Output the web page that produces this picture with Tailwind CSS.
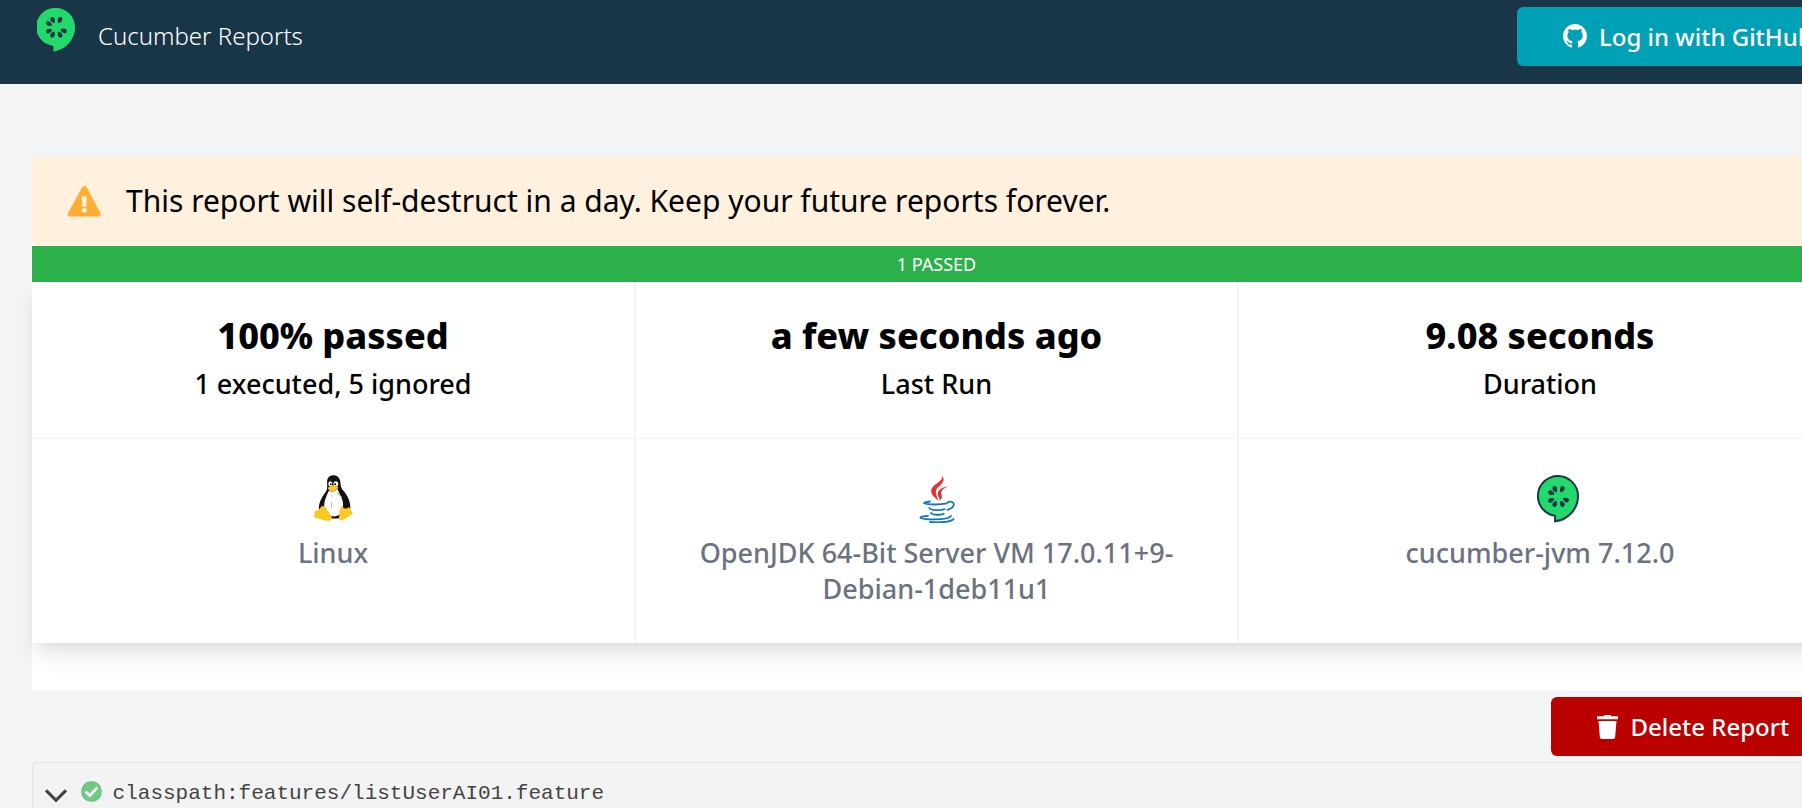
<!DOCTYPE html>
<html lang="en">
<head>
<meta charset="utf-8">
<title>Cucumber Reports</title>
<script src="https://cdn.jsdelivr.net/npm/@tailwindcss/browser@4"></script>
</head>
<body class="bg-[#f3f4f6] font-['Noto_Sans',sans-serif] text-black overflow-hidden">
<svg class="hidden">
  <symbol id="seeds" viewBox="-21 -21 42 42">
    <g>
      <path id="seed" d="M0-4.600C1.200-5.500 2.300-7.200 2.200-9C2.100-10.500 1.200-11.300 0-11.300S-2.100-10.500-2.200-9C-2.300-7.200-1.200-5.500 0-4.600Z" transform="rotate(26)"/>
      <use href="#seed" transform="rotate(-52)"/>
      <use href="#seed" transform="rotate(-90)"/>
      <use href="#seed" transform="rotate(-142)"/>
      <use href="#seed" transform="rotate(-180)"/>
      <use href="#seed" transform="rotate(128)"/>
      <use href="#seed" transform="rotate(88)"/>
    </g>
  </symbol>
</svg>
<div class="w-[1874px] h-[808px] overflow-hidden">
  <header class="h-[84px] bg-[#183648] pl-[37px] pr-8 flex justify-between items-start">
    <a class="flex items-start">
      <svg class="mt-2 w-[38px] h-[44px]" viewBox="0 0 38 44"><path fill="#23d96c" d="M19 0a19 19 0 0 0-2.600 37.900V43.500C28 42 38 32.500 38 19A19 19 0 0 0 19 0Z"/><use href="#seeds" x="-1.700" y="-1.700" width="42" height="42" fill="#183648"/></svg>
      <span class="ml-[23px] mt-[18px] text-2xl leading-9 font-light text-white">Cucumber Reports</span>
    </a>
    <button class="mt-[7px] w-[325px] h-[59px] rounded-md bg-[#00a0b6] flex items-center pl-[46px] text-white text-2xl font-medium whitespace-nowrap">
      <svg class="w-6 h-6 mr-3 -mt-0.5" viewBox="0 0 16 16" fill="currentColor"><path d="M8 0C3.580 0 0 3.580 0 8c0 3.540 2.290 6.530 5.470 7.590.4.070.55-.17.55-.38 0-.19-.01-.82-.01-1.490-2.010.37-2.530-.49-2.690-.94-.09-.23-.48-.94-.82-1.130-.28-.15-.68-.52-.01-.53.63-.01 1.080.58 1.230.82.72 1.210 1.870.87 2.330.66.070-.52.28-.87.51-1.070-1.780-.2-3.640-.89-3.640-3.950 0-.87.31-1.590.82-2.150-.08-.2-.36-1.020.08-2.120 0 0 .67-.21 2.200.82.64-.18 1.320-.27 2-.27s1.360.09 2 .27c1.530-1.040 2.200-.82 2.200-.82.44 1.100.16 1.920.08 2.120.51.56.82 1.270.82 2.150 0 3.070-1.870 3.750-3.650 3.950.29.25.54.73.54 1.480 0 1.070-.01 1.930-.01 2.200 0 .21.15.46.55.38A8.010 8.010 0 0 0 16 8c0-4.420-3.580-8-8-8z"/></svg>
      Log in with GitHub
    </button>
  </header>

  <main class="px-8 pt-18">
    <section class="bg-white rounded-t-md pb-12">
      <div class="h-[90px] bg-[#fff1de] rounded-md flex items-center pl-[35px]">
        <svg class="w-[34px] h-[31px] mr-[25px]" viewBox="0 0 34 31"><path fill="#ffad33" d="M15.200 1.300a2.700 2.700 0 0 1 4.600 0L33.400 27c.9 1.900-.1 3.500-2 3.500H3.100c-1.900 0-2.900-1.600-2-3.500Z"/><path fill="#fff1de" d="M14.700 10.600h5.200l-.7 10.200h-3.800Z"/><circle cx="17.300" cy="24.300" r="2.500" fill="#fff1de"/></svg>
        <p class="text-[30px] leading-[45px] pb-0.5">This report will self-destruct in a day. Keep your future reports forever.</p>
      </div>
      <div class="h-9 bg-[#2cb14a] text-white text-lg leading-9 text-center pr-px">1 PASSED</div>
      <div class="bg-white shadow-[0_15px_22.5px_-4.5px_rgba(0,0,0,0.1),0_6px_9px_-3px_rgba(0,0,0,0.05)]">
        <div class="grid grid-cols-[604px_603px_603px] grid-rows-[157px_204px] text-center text-[27px] leading-9 font-medium">
          <div class="border-r-2 border-b border-[#f3f4f6] pt-[34px]">
            <h2 class="text-4xl font-extrabold">100% passed</h2><p class="mt-2.5">1 executed, 5 ignored</p>
          </div>
          <div class="border-r-2 border-b border-[#f3f4f6] pt-[34px]">
            <h2 class="text-4xl font-extrabold">a few seconds ago</h2><p class="mt-2.5">Last Run</p>
          </div>
          <div class="border-b border-[#f3f4f6] pt-[34px] pr-px">
            <h2 class="text-4xl font-extrabold">9.08 seconds</h2><p class="mt-2.5">Duration</p>
          </div>
          <div class="border-r-2 border-[#f3f4f6] pt-9 text-[#6b7280]">
            <svg class="mx-auto w-12 h-12" viewBox="0 0 48 48">
              <path fill="#111" d="M24.300.3c-4.600 0-6.500 3.300-6.200 7.900.2 4.200.5 6-2.100 9.700C12.300 22.500 9.500 29 9.900 34c0 5 5 9.500 12 9.500h6c7 0 12.500-4 13.300-9.500C42 26.500 38 20 34.300 15.500 31 12.100 32 9 31 5.300 30.200 2 27.500.3 24.300.3Z"/>
              <path fill="#fff" d="M20 15.500c1.800 2 5.500 1.200 8.700-1.500 1.200 4.500 5 9 5.300 14.500.4 4-1.800 8-3 10.500-2.500 2.800-7.500 3-9.500 1.500l-6.300-9c-.5-4 1.800-10 4.800-16Z"/>
              <ellipse cx="21.300" cy="8.800" rx="2" ry="2.500" fill="#fff"/><ellipse cx="26.800" cy="8.800" rx="2.400" ry="2.600" fill="#fff"/>
              <circle cx="21.900" cy="9.200" r=".9"/><circle cx="26.200" cy="9.200" r="1"/>
              <path fill="#fdc820" d="M18.800 13c1.800-2 3.700-3 5-2.800l5.300 1.600c1.200 1-3 4.600-5.300 4.800-2 .2-4.600-1.800-5-3.600ZM12.300 31.500c1.500-1.300 3.800-.3 5 2l4.500 6.500c3 4.500-.5 6.500-4.500 5.700L7.200 43c-3-.6-1.500-3-1.700-5.300-.3-2.500 3-2 4.500-3.300ZM31 34c.5-2 1.500-3 3-1.500 2 1.700 4.500 1.500 5.500-.5 1.500.5 1.500 3 4 5.500 1 1.500-1.500 2.500-4.500 4.300l-4 2.700c-3.500 2-5.500.5-5-3Z"/>
              <path d="M23 20v2M22.500 27v6" stroke="#bbb" fill="none"/><path d="M28 18l5 4" stroke="#999" fill="none"/>
            </svg>
            <p class="mt-3">Linux</p>
          </div>
          <div class="border-r-2 border-[#f3f4f6] pt-9 text-[#6b7280]">
            <svg class="mx-auto w-12 h-12" viewBox="0 0 48 48">
              <path fill="#ea2d2e" d="M29.500.7C32 5.500 30 7.600 26 11.200 21.300 15.600 22.500 18.500 25.500 25.500 19 20.800 16 16.500 19.800 12 24 7 30 6 29.500.7ZM35 11.300c-5 2.500-8 5-6.500 8.200 1 2.200.4 4.100-2 6.500.8-3.600-2-4.600-1.800-7.500.4-4.200 5.700-6.200 10.300-7.200Z"/>
              <g fill="none" stroke="#1277bd" stroke-width="1.800" stroke-linecap="round"><path d="M17 26.500C8.500 27.600 9.500 28.800 18 29.400c6 .3 12-.1 16-1M35 27.200c6.500-2.300 9 4.500-.5 7.700M16.300 33c1 2.600 11.500 2.700 15.300 1.200M18 38c1.500 2.200 9.200 2.200 12.700.8M15 40.800C5 41.500 4 43.700 17 44.300c9 .4 18.500.2 21-3.300M17 47c8 .8 21.500.2 23.500-3"/></g>
            </svg>
            <p class="mt-3">OpenJDK 64-Bit Server VM 17.0.11+9-<br>Debian-1deb11u1</p>
          </div>
          <div class="pt-9 pr-px text-[#6b7280]">
            <svg class="ml-[298px] w-[42px] h-12" viewBox="0 0 42 48"><path fill="#23d96c" stroke="#183648" stroke-width="2" d="M21 1a20 20 0 0 0-2.900 39.800V46.300C31 45 41 34 41 21A20 20 0 0 0 21 1Z"/><use href="#seeds" x="0.500" y="0.500" width="42" height="42" fill="#183648"/></svg>
            <p class="mt-3">cucumber-jvm 7.12.0</p>
          </div>
        </div>
      </div>
    </section>
    <div class="flex justify-end py-1.5">
      <button class="w-[291px] h-[59px] rounded-md bg-[#bb0000] text-white text-2xl font-medium flex items-center pl-[46px]">
        <svg class="w-[21px] h-6 mr-[12.5px]" viewBox="0 0 21 24" fill="currentColor"><path d="M0 1.300h7V0h7v1.300h7v2.900H0ZM1.500 6h18l-1.400 16.200A2 2 0 0 1 16.200 24H4.800a2 2 0 0 1-1.900-1.800Z"/></svg>
        Delete Report
      </button>
    </div>
    <section class="h-24 bg-[#f3f3f3] border border-[#e1e4e7] rounded-t-sm flex items-start pl-3 pt-[13px] font-['Liberation_Mono',monospace] text-[21px] leading-8 text-[#444]">
      <svg class="w-[22px] h-[14px] mt-[13px]" viewBox="0 0 22 14" fill="none" stroke="#444" stroke-width="3.200"><path d="M1 1.300 11 11.300 21 1.300"/></svg>
      <svg class="w-[21px] h-[21px] ml-[14px] mt-[5px]" viewBox="0 0 21 21"><circle cx="10.500" cy="10.500" r="10.500" fill="#6fc984"/><path d="M4.500 10.500 8.700 14.500 16.500 6.500" fill="none" stroke="#f3f3f3" stroke-width="2.800"/></svg>
      <span class="ml-[10.6px] mt-0.5 whitespace-nowrap">classpath:features/listUserAI01.feature</span>
    </section>
  </main>
</div>
</body>
</html>
